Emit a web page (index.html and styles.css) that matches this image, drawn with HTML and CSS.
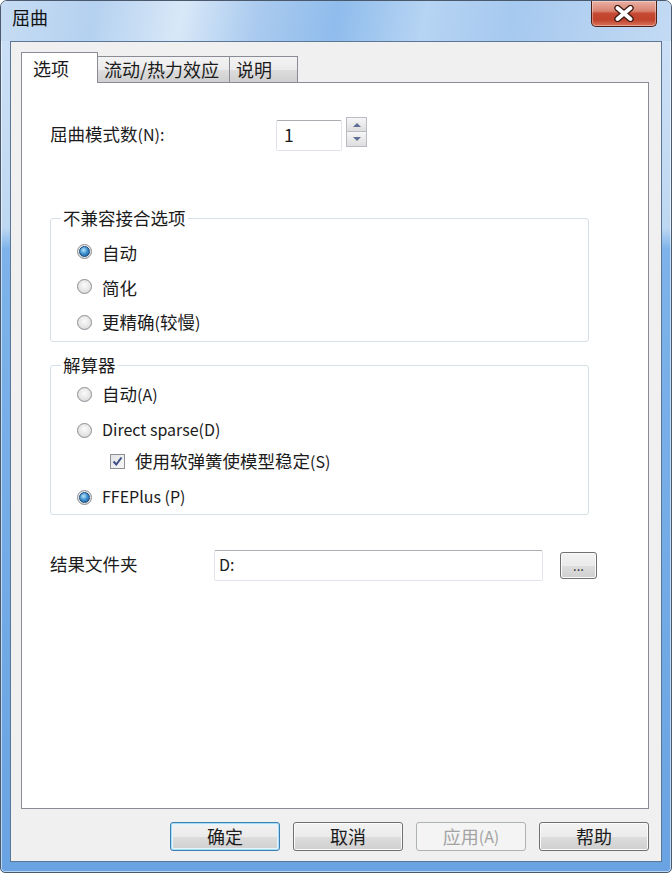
FILE: index.html
```html
<!DOCTYPE html>
<html lang="zh-CN">
<head>
  <meta charset="UTF-8">
  <title>屈曲</title>
  <link rel="stylesheet" href="styles.css">
</head>
<body>
  <div class="window">
    <div class="titlebar">
      <div class="title">屈曲</div>
      <div class="close">
        <svg width="24" height="17" viewBox="0 0 24 17">
          <path d="M5.5 3 L18.5 14 M18.5 3 L5.5 14" stroke="#3b1912" stroke-width="6.4" stroke-linecap="round"/>
          <path d="M5.5 3 L18.5 14 M18.5 3 L5.5 14" stroke="#ffffff" stroke-width="4" stroke-linecap="round"/>
        </svg>
      </div>
    </div>

    <div class="client">
      <div class="tabs">
        <div class="tab tab-active">选项</div>
        <div class="tab tab-flow">流动/热力效应</div>
        <div class="tab tab-note">说明</div>
      </div>

      <div class="panel">
        <div class="row-modes">
          <span class="label-modes">屈曲模式数<span class="lat">(N):</span></span>
          <div class="textbox textbox-num">1</div>
          <div class="spinner">
            <div class="spin-btn"><span class="arrow-up"></span></div>
            <div class="spin-btn"><span class="arrow-down"></span></div>
          </div>
        </div>

        <fieldset class="group group-joint">
          <legend>不兼容接合选项</legend>
          <div class="opt"><span class="radio radio-on"></span>自动</div>
          <div class="opt"><span class="radio"></span>简化</div>
          <div class="opt"><span class="radio"></span><span>更精确<span class="lat">(</span>较慢<span class="lat">)</span></span></div>
        </fieldset>

        <fieldset class="group group-solver">
          <legend>解算器</legend>
          <div class="opt"><span class="radio"></span><span>自动<span class="lat">(A)</span></span></div>
          <div class="opt opt-gap"><span class="radio"></span><span class="lat">Direct sparse(D)</span></div>
          <div class="opt opt-check">
            <span class="check">
              <svg width="11" height="11" viewBox="0 0 11 11">
                <path d="M1.5 5.5 L4.3 8.5 L9.5 1.5" fill="none" stroke="#3d4f86" stroke-width="2"/>
              </svg>
            </span><span>使用软弹簧使模型稳定<span class="lat">(S)</span></span>
          </div>
          <div class="opt opt-gap"><span class="radio radio-on"></span><span class="lat">FFEPlus (P)</span></div>
        </fieldset>

        <div class="row-folder">
          <span class="label-folder">结果文件夹</span>
          <div class="textbox textbox-path"><span class="lat">D:</span></div>
          <div class="browse">...</div>
        </div>
      </div>

      <div class="buttons">
        <div class="btn btn-default">确定</div>
        <div class="btn">取消</div>
        <div class="btn btn-disabled">应用<span class="lat">(A)</span></div>
        <div class="btn">帮助</div>
      </div>
    </div>
  </div>
</body>
</html>
```

FILE: styles.css
```css
* {
  margin: 0;
  padding: 0;
  box-sizing: border-box;
}
body {
  width: 672px;
  height: 873px;
  background: #fff;
  font-family: "Noto Sans CJK SC", "Liberation Sans", sans-serif;
  font-size: 17.5px;
  color: #1b1b1b;
  overflow: hidden;
}
.lat {
  font-size: 16px;
}
.window {
  width: 672px;
  height: 873px;
  border: 1px solid #4a5a6c;
  border-radius: 7px 7px 5px 5px;
  background: linear-gradient(to bottom, #cde1f6 0%, #bfd8f2 26%, #7db3ea 28.5%, #6aa3e2 100%);
  box-shadow: inset 0 0 0 1px rgba(255,255,255,0.55);
  padding: 0 9px 10px;
  display: flex;
  flex-direction: column;
}
.titlebar {
  height: 40px;
  margin: 0 -9px;
  padding: 0 14px 0 11px;
  display: flex;
  justify-content: space-between;
  align-items: flex-start;
  border-radius: 6px 6px 0 0;
  background: linear-gradient(100deg, #c6dcf3 0%, #b5d1f0 14%, #d8e8f8 27%, #abcbef 38%, #8fbcec 50%, #b6d4f3 63%, #a6c9ef 76%, #c3daf3 100%);
}
.title {
  margin-top: 4px;
  line-height: 24px;
  font-size: 18px;
  color: #111;
}
.close {
  width: 66px;
  height: 26px;
  border: 1px solid #4f1f16;
  border-top: none;
  border-radius: 0 0 5px 5px;
  background: linear-gradient(to bottom, #eab0a3 0%, #d98371 40%, #c64a33 50%, #c0432c 75%, #d9735c 100%);
  box-shadow: inset 0 0 0 1px rgba(255,255,255,0.35);
  display: flex;
  justify-content: center;
  align-items: center;
}

/* client area */
.client {
  flex: 1;
  background: #f0f0f0;
  border: 1px solid #5b7795;
  padding: 10px 12px 10px 10px;
  display: flex;
  flex-direction: column;
}
.tabs {
  display: flex;
  align-items: flex-end;
  height: 31px;
  margin-bottom: -1px;
  position: relative;
  z-index: 1;
  font-size: 18px;
}
.tab {
  height: 26px;
  margin-bottom: 1px;
  border: 1px solid #898c95;
  border-left: none;
  border-bottom: none;
  background: linear-gradient(to bottom, #f3f3f3 0%, #ebebeb 50%, #dddddd 51%, #cfcfcf 100%);
  line-height: 24px;
  padding-top: 0;
  white-space: nowrap;
}
.tab-active {
  width: 77px;
  height: 31px;
  margin-bottom: 0;
  border-left: 1px solid #898c95;
  background: #fff;
  padding: 3px 0 0 11px;
}
.tab-flow {
  width: 132px;
  padding-left: 6px;
}
.tab-note {
  width: 68px;
  padding-left: 6px;
}
.panel {
  flex: 1;
  background: #fff;
  border: 1px solid #898c95;
  padding: 37px 0 0 28px;
}

/* first row */
.row-modes {
  display: flex;
  align-items: center;
}
.label-modes {
  width: 226px;
  padding-bottom: 5px;
}
.textbox {
  height: 31px;
  background: #fff;
  border: 1px solid #e2e3ea;
  border-top-color: #abadb3;
  border-radius: 2px;
  display: flex;
  align-items: center;
  padding-bottom: 2px;
}
.textbox-num {
  width: 66px;
  padding-left: 7px;
}
.spinner {
  width: 21px;
  margin-left: 4px;
  align-self: flex-start;
  margin-top: -3px;
  display: flex;
  flex-direction: column;
}
.spin-btn {
  height: 15px;
  border: 1px solid #b9bcc2;
  background: linear-gradient(to bottom, #f6f6f6, #dedede);
  display: flex;
  justify-content: center;
  align-items: center;
}
.spin-btn + .spin-btn {
  border-top: none;
}
.arrow-up,
.arrow-down {
  width: 0;
  height: 0;
  border-left: 4px solid transparent;
  border-right: 4px solid transparent;
}
.arrow-up {
  border-bottom: 4px solid #5f6f98;
}
.arrow-down {
  border-top: 4px solid #5f6f98;
}

/* group boxes */
.group {
  width: 539px;
  border: 1px solid #d5dfe5;
  border-radius: 3px;
}
.group legend {
  margin-left: 10px;
  padding: 0 2px;
  line-height: 20px;
}
.group-joint {
  margin-top: 57px;
  padding: 12px 0 7px;
}
.group-joint .opt + .opt {
  margin-top: 11px;
}
.group-solver {
  margin-top: 13px;
  padding: 7px 0 5px;
}
.opt {
  height: 24px;
  display: flex;
  align-items: center;
  gap: 10px;
  padding-left: 26px;
}
.opt > span:last-child {
  margin-top: -2px;
}
.opt-gap {
  margin-top: 12px;
}
.opt-check {
  margin-top: 7px;
  padding-left: 59px;
}
.radio {
  width: 15px;
  height: 15px;
  border-radius: 50%;
  border: 1px solid #8a8d92;
  background: radial-gradient(circle at 50% 40%, #fbfbfb 0%, #e4e4e4 60%, #cbccce 100%);
  display: flex;
  justify-content: center;
  align-items: center;
  flex-shrink: 0;
}
.radio.radio-on {
  margin-top: 0;
}
.radio-on::after {
  content: '';
  width: 9px;
  height: 9px;
  border-radius: 50%;
  border: 1px solid #1b4a7c;
  background: radial-gradient(circle at 40% 35%, #b6e6fb 0%, #3a8dcd 50%, #1f5690 100%);
}
.check {
  width: 15px;
  height: 15px;
  border: 1px solid #8d9095;
  background: linear-gradient(135deg, #e2e3e6, #f7f7f7);
  display: flex;
  justify-content: center;
  align-items: center;
  flex-shrink: 0;
}

/* results folder */
.row-folder {
  margin-top: 35px;
  display: flex;
  align-items: center;
}
.label-folder {
  width: 164px;
  padding-bottom: 4px;
}
.textbox-path {
  width: 329px;
  padding-left: 4px;
  padding-bottom: 4px;
}
.browse {
  width: 37px;
  height: 27px;
  margin-left: 17px;
  border: 1px solid #707070;
  border-radius: 3px;
  background: linear-gradient(to bottom, #f2f2f2 0%, #ebebeb 50%, #dddddd 51%, #cfcfcf 100%);
  box-shadow: inset 0 0 0 1px #fbfbfb;
  font-size: 13px;
  line-height: 1;
  display: flex;
  justify-content: center;
  align-items: flex-end;
  padding-bottom: 6px;
}

/* dialog buttons */
.buttons {
  margin-top: 13px;
  display: flex;
  justify-content: flex-end;
  gap: 13px;
  font-size: 18px;
}
.btn {
  width: 110px;
  height: 29px;
  border: 1px solid #707070;
  border-radius: 3px;
  background: linear-gradient(to bottom, #f2f2f2 0%, #ebebeb 50%, #dddddd 51%, #cfcfcf 100%);
  box-shadow: inset 0 0 0 1px #fbfbfb;
  display: flex;
  justify-content: center;
  align-items: center;
  line-height: 1;
  padding-bottom: 2px;
}
.btn-default {
  border-color: #3c7fb1;
  box-shadow: inset 0 0 0 1px #a6dcf5, inset 0 0 0 2px #e6f5fc;
}
.btn-disabled {
  border-color: #adb2b5;
  background: #f4f4f4;
  box-shadow: none;
  color: #a3a3a3;
}
```
